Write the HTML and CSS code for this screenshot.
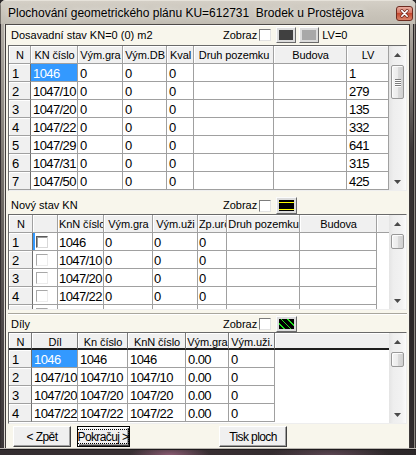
FILE: index.html
```html
<!DOCTYPE html>
<html lang="cs">
<head>
<meta charset="utf-8">
<title>Plochování geometrického plánu</title>
<link rel="stylesheet" href="styles.css">
</head>
<body>
<div class="window">
  <div class="titlebar">
    <span class="title">Plochování geometrického plánu KU=612731  Brodek u Prostějova</span>
    <svg class="close" width="17" height="15" viewBox="0 0 17 15">
      <defs>
        <linearGradient id="cg" x1="0" y1="0" x2="0" y2="1">
          <stop offset="0" stop-color="#eab2a4"/>
          <stop offset=".45" stop-color="#d67563"/>
          <stop offset=".5" stop-color="#c4482f"/>
          <stop offset="1" stop-color="#db8a70"/>
        </linearGradient>
      </defs>
      <rect x=".5" y=".5" width="16" height="14" rx="2.5" fill="url(#cg)" stroke="#6e2c20"/>
      <path d="M5.8 4.6l5.4 5.6M11.2 4.6l-5.4 5.6" stroke="#6a2418" stroke-width="3" stroke-linecap="round"/>
      <path d="M5.8 4.6l5.4 5.6M11.2 4.6l-5.4 5.6" stroke="#fff" stroke-width="1.6" stroke-linecap="round"/>
    </svg>
  </div>
  <div class="middle">
    <div class="lf"></div>
    <div class="client">

      <section class="panel p1">
        <div class="head">
          <span class="lbl">Dosavadní stav KN=0 (0) m2</span>
          <span class="zob">Zobraz</span><span class="cb"></span>
          <span class="sw"><i class="f-dark"></i></span><span class="sw"><i class="f-gray"></i></span>
          <span class="lv">LV=0</span>
        </div>
        <div class="grid g1">
          <div class="gt">
            <div class="r h"><span>N</span><span>KN číslo</span><span>Vým.gra</span><span>Vým.DB</span><span>Kval</span><span>Druh pozemku</span><span>Budova</span><span>LV</span></div>
            <div class="r"><span class="n">1</span><span class="sel">1046</span><span>0</span><span>0</span><span>0</span><span></span><span></span><span>1</span></div>
            <div class="r"><span class="n">2</span><span>1047/10</span><span>0</span><span>0</span><span>0</span><span></span><span></span><span>279</span></div>
            <div class="r"><span class="n">3</span><span>1047/20</span><span>0</span><span>0</span><span>0</span><span></span><span></span><span>135</span></div>
            <div class="r"><span class="n">4</span><span>1047/22</span><span>0</span><span>0</span><span>0</span><span></span><span></span><span>332</span></div>
            <div class="r"><span class="n">5</span><span>1047/29</span><span>0</span><span>0</span><span>0</span><span></span><span></span><span>641</span></div>
            <div class="r"><span class="n">6</span><span>1047/31</span><span>0</span><span>0</span><span>0</span><span></span><span></span><span>315</span></div>
            <div class="r"><span class="n">7</span><span>1047/50</span><span>0</span><span>0</span><span>0</span><span></span><span></span><span>425</span></div>
          </div>
          <div class="vs">
            <div class="ar"><svg width="7" height="4" viewBox="0 0 7 4"><path d="M0 4h7L3.5 0z" fill="#4a4a4a"/></svg></div>
            <div class="th big"><i></i><i></i><i></i><i></i></div>
            <div class="sp"></div>
            <div class="ar"><svg width="7" height="4" viewBox="0 0 7 4"><path d="M0 0h7L3.5 4z" fill="#4a4a4a"/></svg></div>
          </div>
        </div>
      </section>

      <section class="panel p2">
        <div class="head">
          <span class="lbl">Nový stav KN</span>
          <span class="zob">Zobraz</span><span class="cb"></span>
          <span class="sw"><i class="f-yel"></i></span>
        </div>
        <div class="grid g2">
          <div class="gt">
            <div class="r h"><span>N</span><span></span><span>KnN číslo</span><span>Vým.gra</span><span>Vým.uži</span><span>Zp.určení</span><span>Druh pozemku</span><span>Budova</span><span class="f"></span></div>
            <div class="r"><span class="n">1</span><span class="ck cur"><b class="chk dark"></b></span><span>1046</span><span>0</span><span>0</span><span>0</span><span></span><span></span><span class="f"></span></div>
            <div class="r"><span class="n">2</span><span class="ck"><b class="chk"></b></span><span>1047/10</span><span>0</span><span>0</span><span>0</span><span></span><span></span><span class="f"></span></div>
            <div class="r"><span class="n">3</span><span class="ck"><b class="chk"></b></span><span>1047/20</span><span>0</span><span>0</span><span>0</span><span></span><span></span><span class="f"></span></div>
            <div class="r"><span class="n">4</span><span class="ck"><b class="chk"></b></span><span>1047/22</span><span>0</span><span>0</span><span>0</span><span></span><span></span><span class="f"></span></div>
            <div class="r"><span class="n"></span><span class="ck"><b class="chk"></b></span><span></span><span></span><span></span><span></span><span></span><span></span><span class="f"></span></div>
          </div>
          <div class="vs">
            <div class="ar"><svg width="7" height="4" viewBox="0 0 7 4"><path d="M0 4h7L3.5 0z" fill="#4a4a4a"/></svg></div>
            <div class="th"></div>
            <div class="sp"></div>
            <div class="ar"><svg width="7" height="4" viewBox="0 0 7 4"><path d="M0 0h7L3.5 4z" fill="#4a4a4a"/></svg></div>
          </div>
        </div>
      </section>

      <section class="panel p3">
        <div class="head">
          <span class="lbl">Díly</span>
          <span class="zob">Zobraz</span><span class="cb"></span>
          <span class="sw"><i class="f-hatch"></i></span>
        </div>
        <div class="grid g3">
          <div class="gt">
            <div class="r h"><span>N</span><span>Díl</span><span>Kn číslo</span><span>KnN číslo</span><span>Vým.gra</span><span>Vým.uži.</span><span class="f"></span></div>
            <div class="r"><span class="n">1</span><span class="sel">1046</span><span>1046</span><span>1046</span><span>0.00</span><span>0</span><span class="f"></span></div>
            <div class="r"><span class="n">2</span><span>1047/10</span><span>1047/10</span><span>1047/10</span><span>0.00</span><span>0</span><span class="f"></span></div>
            <div class="r"><span class="n">3</span><span>1047/20</span><span>1047/20</span><span>1047/20</span><span>0.00</span><span>0</span><span class="f"></span></div>
            <div class="r"><span class="n">4</span><span>1047/22</span><span>1047/22</span><span>1047/22</span><span>0.00</span><span>0</span><span class="f"></span></div>
          </div>
          <div class="vs">
            <div class="ar"><svg width="7" height="4" viewBox="0 0 7 4"><path d="M0 4h7L3.5 0z" fill="#4a4a4a"/></svg></div>
            <div class="th"></div>
            <div class="sp"></div>
            <div class="ar"><svg width="7" height="4" viewBox="0 0 7 4"><path d="M0 0h7L3.5 4z" fill="#4a4a4a"/></svg></div>
          </div>
        </div>
      </section>

      <div class="buttons">
        <button class="btn b-zpet">&lt; Zpět</button>
        <button class="btn b-pok def"><span class="focus">Pokračuj &gt;</span></button>
        <button class="btn b-tisk">Tisk ploch</button>
      </div>

    </div>
    <div class="rf"></div>
  </div>
  <div class="bf"></div>
</div>
</body>
</html>
```

FILE: styles.css
```css
* { box-sizing: border-box; }
html, body { margin: 0; padding: 0; background: #2a2628; overflow: hidden; }
body { font-family: "Liberation Sans", Arial, sans-serif; font-size: 11px; color: #000; }

.window {
  width: 416px; height: 455px;
  display: flex; flex-direction: column;
  overflow: hidden;
  border-radius: 6px 6px 0 0;
  background: #bdb8af;
}

/* title bar */
.titlebar {
  height: 24px; flex: none;
  display: flex; align-items: flex-start;
  padding: 0 3px 0 8px;
  background: linear-gradient(#d5d0c7, #c9c4ba 55%, #c2bdb3);
  box-shadow: inset 0 1px #e6e2da, inset 1px 0 #77726c, inset -1px 0 #77726c;
}
.title {
  flex: 1;
  margin-top: 6px;
  font-size: 12px; line-height: 14px;
  white-space: pre;
  text-shadow: 0 0 6px rgba(255,255,255,.9);
}
.close { flex: none; margin-top: 6px; display: block; }

/* frame */
.middle { flex: 1; display: flex; min-height: 0; }
.lf {
  width: 6px; flex: none;
  background:
    linear-gradient(to right, #332e2f 0 1px, transparent 1px 4px, #d9d5ce 4px 5px, #403c3b 5px 6px),
    linear-gradient(#b3aea6, #77726c 35%, #4e4949 70%, #3c3738);
}
.rf {
  width: 7px; flex: none;
  background:
    linear-gradient(to right, #3e3a3a 0 1px, transparent 1px 4px, #2a2627 4px 5px, #8d8882 5px 6px, #3a3637 6px 7px),
    linear-gradient(#b6b1a9, #3a3536 30%, #2b2728 70%, #312c2e);
}
.bf {
  height: 7px; flex: none;
  background:
    linear-gradient(#b9b5b0 0 1px, #1e1b1c 1px 2px, transparent 2px),
    radial-gradient(ellipse 40px 10px at 170px 100%, #8a5b72, transparent),
    radial-gradient(ellipse 60px 10px at 330px 100%, #5b4652, transparent),
    linear-gradient(to right, #332d30, #3a3034 40%, #2c2729);
}

.client {
  width: 403px; flex: none;
  display: flex; flex-direction: column;
  background: #f8f6ec;
  border-top: 1px solid #4e4a47;
}

/* panels */
.panel { flex: none; padding: 0 2px; }
.p1 { height: 167px; }
.p2 { height: 121px; }
.p3 { height: 111px; }

.head { display: flex; align-items: center; padding-left: 3px; white-space: nowrap; }
.p1 .head { height: 20px; box-shadow: inset 0 1px #fff; }
.p2 .head { height: 22px; padding-top: 5px; }
.p3 .head { height: 19px; padding-top: 2px; border-top: 1px solid #a9a69d; box-shadow: inset 0 1px #fff; }

.lbl { width: 212px; flex: none; line-height: 13px; }
.zob { margin-right: 2px; line-height: 13px; }
.lv { margin-left: 3px; line-height: 13px; }
.cb {
  width: 12px; height: 12px; flex: none;
  margin-right: 5px;
  background: #fff;
  border: 1px solid; border-color: #7c7c7c #e2e2e2 #e2e2e2 #7c7c7c;
}
.sw {
  flex: none; display: block;
  width: 21px; height: 16px;
  padding: 2px;
  border: 1px solid; border-color: #fbfbfb #6a6a6a #6a6a6a #fbfbfb;
  background: #dcdcdc;
}
.p1 .sw { width: 20px; }
.p2 .sw { height: 17px; }
.sw + .sw { margin-left: 3px; }
.sw i { display: block; width: 100%; height: 100%; }
.f-dark { background: #404040; }
.f-gray { background: #a8a8a8; }
.f-yel { background: linear-gradient(#000 0 2px, #ffff00 2px 3px, #000 3px 9px, #ffff00 9px 10px, #000 10px); }
.f-hatch { background: repeating-linear-gradient(45deg, #000 0 3.5px, #20e020 3.5px 4.5px); }

/* grids */
.grid {
  display: flex;
  border: 1px solid; border-color: #6a6a6a #eeeeee #eeeeee #6a6a6a;
  background: #fff;
  overflow: hidden;
}
.g1 { height: 146px; }
.g2 { height: 96px; }
.g3 { height: 92px; }
.gt { width: 380px; flex: none; overflow: hidden; }

.r { display: flex; height: 18px; }
.r > span {
  flex: none; display: block;
  height: 18px;
  border-right: 1px solid #a0a0a0;
  border-bottom: 1px solid #a0a0a0;
  overflow: hidden; white-space: nowrap;
  padding: 2px 0 0 2px;
  font-family: "Liberation Sans", Arial, sans-serif;
  font-size: 13px; line-height: 16px;
  letter-spacing: -0.6px;
}
.g2 .r > span { padding-left: 1px; }
.r > .n {
  background: #f0f0f0;
  border-right-color: #6e6e6e;
  box-shadow: inset 1px 1px #fff;
  padding-left: 3px;
}
.g2 .r > .n { padding-left: 3px; }
.r > .sel { background: #3399ff; color: #fff; }
.r > .f { flex: 1; border: none; }

.r.h > span {
  font-size: 11px; line-height: 15px;
  letter-spacing: -0.1px;
  text-align: center;
  padding: 2px 0 0 1px;
  background: #f0f0f0;
  box-shadow: inset 1px 1px #fff;
}
.r.h > .f { border-bottom: 1px solid #a0a0a0; }

.g3 .r.h { height: 17px; }
.g3 .r.h > span {
  height: 17px;
  padding-top: 2px;
  border-right-color: #7a7a7a;
  border-bottom: 2px solid #1e1e1e;
}

/* column widths */
.g1 .r > :nth-child(1) { width: 22px; }
.g1 .r > :nth-child(2) { width: 47px; }
.g1 .r > :nth-child(3) { width: 45px; }
.g1 .r > :nth-child(4) { width: 44px; }
.g1 .r > :nth-child(5) { width: 27px; }
.g1 .r > :nth-child(6) { width: 80px; }
.g1 .r > :nth-child(7) { width: 73px; }
.g1 .r > :nth-child(8) { width: 42px; }

.g2 .r > :nth-child(1) { width: 24px; }
.g2 .r > :nth-child(2) { width: 25px; }
.g2 .r > :nth-child(3) { width: 46px; }
.g2 .r > :nth-child(4) { width: 49px; }
.g2 .r > :nth-child(5) { width: 45px; }
.g2 .r > :nth-child(6) { width: 29px; }
.g2 .r > :nth-child(7) { width: 73px; }
.g2 .r > :nth-child(8) { width: 77px; }

.g3 .r > :nth-child(1) { width: 23px; }
.g3 .r > :nth-child(2) { width: 46px; }
.g3 .r > :nth-child(3) { width: 50px; }
.g3 .r > :nth-child(4) { width: 58px; }
.g3 .r > :nth-child(5) { width: 43px; }
.g3 .r > :nth-child(6) { width: 46px; }

/* checkbox column */
.g2 .r > .ck { padding: 3px 0 0 3px; }
.r > .ck.cur { box-shadow: inset 2px 0 #3399ff; }
.chk {
  display: block; width: 12px; height: 12px;
  background: #fff;
  border: 1px solid; border-color: #a8a8a8 #ececec #ececec #a8a8a8;
}
.chk.dark { border-color: #5a5a5a #d8d8d8 #d8d8d8 #5a5a5a; box-shadow: inset 1px 1px #9a9a9a; }

/* scrollbar */
.vs {
  width: 17px; flex: none;
  display: flex; flex-direction: column;
  background: linear-gradient(to right, #e4e4e4, #eeeeee 25%, #f2f2f2 75%, #fbfbfb);
}
.ar { height: 17px; flex: none; display: flex; align-items: center; justify-content: center; }
.ar svg { display: block; }
.th {
  flex: none;
  margin: 2px 2px 0;
  height: 15px;
  border: 1px solid #989898;
  border-radius: 2px;
  background: linear-gradient(to right, #f4f4f4, #ebebeb 50%, #dcdcdc 51%, #d0d0d0);
  box-shadow: inset 1px 1px #fcfcfc;
  display: flex; flex-direction: column; align-items: center; justify-content: center; gap: 1px;
}
.th.big { height: 34px; }
.th i { display: block; width: 6px; height: 1px; background: #7b7b7b; box-shadow: 0 1px #fff; }
.sp { flex: 1; }

/* buttons */
.buttons { height: 24px; flex: none; display: flex; align-items: flex-start; padding: 2px 0 0 7px; }
.btn {
  height: 21px; margin: 0; padding: 0;
  display: flex; align-items: center; justify-content: center;
  white-space: nowrap;
  font-family: "Liberation Sans", Arial, sans-serif;
  font-size: 12px; letter-spacing: -0.6px; line-height: 14px;
  color: #000;
  background: #f0f0f0;
  border: 1px solid; border-color: #ffffff #404040 #404040 #ffffff;
  box-shadow: inset -1px -1px #a0a0a0;
  border-radius: 0;
}
.b-zpet { width: 58px; }
.b-pok { width: 53px; margin-left: 6px; }
.b-tisk { width: 68px; margin-left: 89px; }
.btn.def {
  border: 1px solid #000;
  box-shadow: inset 1px 1px #fff, inset -1px -1px #404040, inset -2px -2px #a0a0a0;
  padding: 2px 3px 2px 2px;
}
.focus {
  flex: 1; align-self: stretch;
  display: flex; align-items: center; justify-content: center;
  outline: 1px dotted #000; outline-offset: -1px;
}
```
